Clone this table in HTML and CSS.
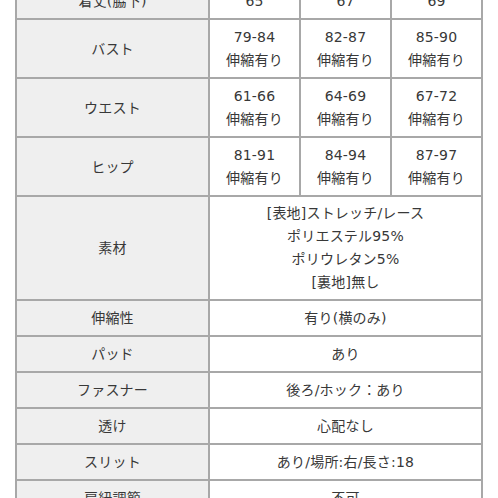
FILE: index.html
```html
<!DOCTYPE html>
<html lang="ja">
<head>
<meta charset="utf-8">
<link rel="stylesheet" href="styles.css">
</head>
<body>
<table class="spec">
  <colgroup>
    <col class="c-label">
    <col class="c-val">
    <col class="c-val">
    <col class="c-val">
  </colgroup>
  <tr><th>着丈(脇下)</th><td>65</td><td>67</td><td>69</td></tr>
  <tr class="two"><th>バスト</th><td>79-84<br>伸縮有り</td><td>82-87<br>伸縮有り</td><td>85-90<br>伸縮有り</td></tr>
  <tr class="two"><th>ウエスト</th><td>61-66<br>伸縮有り</td><td>64-69<br>伸縮有り</td><td>67-72<br>伸縮有り</td></tr>
  <tr class="two"><th>ヒップ</th><td>81-91<br>伸縮有り</td><td>84-94<br>伸縮有り</td><td>87-97<br>伸縮有り</td></tr>
  <tr class="four"><th>素材</th><td colspan="3">[表地]ストレッチ/レース<br>ポリエステル95%<br>ポリウレタン5%<br>[裏地]無し</td></tr>
  <tr><th>伸縮性</th><td colspan="3">有り(横のみ)</td></tr>
  <tr><th>パッド</th><td colspan="3">あり</td></tr>
  <tr><th>ファスナー</th><td colspan="3">後ろ/ホック：あり</td></tr>
  <tr><th>透け</th><td colspan="3">心配なし</td></tr>
  <tr><th>スリット</th><td colspan="3">あり/場所:右/長さ:18</td></tr>
  <tr><th>肩紐調節</th><td colspan="3">不可</td></tr>
</table>
</body>
</html>
```

FILE: styles.css
```css
html, body {
  margin: 0;
  padding: 0;
  background: #ffffff;
}
body {
  padding-left: 15px;
  overflow: hidden;
  height: 498px;
}
.spec {
  margin-top: -18px;
  border-collapse: collapse;
  table-layout: fixed;
  width: 466px;
  font-family: "DejaVu Sans", "Noto Sans CJK JP", sans-serif;
  font-size: 14px;
  color: #383838;
  line-height: 23px;
}
.spec .c-label { width: 193px; }
.spec .c-val { width: 91px; }
.spec th,
.spec td {
  border: 2px solid #a8a8a8;
  padding: 6px 2px 5px;
  text-align: center;
  vertical-align: middle;
  font-weight: normal;
  letter-spacing: 0.2px;
}
.spec .four th,
.spec .four td {
  padding: 5px 2px 5px;
}
.spec th {
  background: #efefef;
}
.spec td {
  background: #ffffff;
}
```
